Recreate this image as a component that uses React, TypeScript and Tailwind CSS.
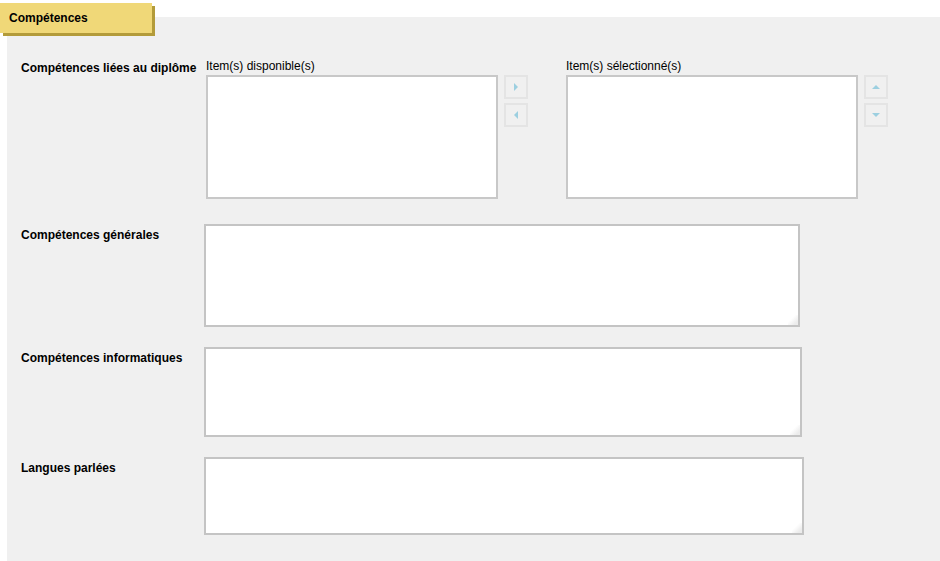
import React from 'react'

function Arrow({ dir }: { dir: 'right' | 'left' | 'up' | 'down' }) {
  const pts = {
    right: '2,0 6,4 2,8',
    left: '6,0 2,4 6,8',
    up: '0,6 4,2 8,6',
    down: '0,2 4,6 8,2',
  }[dir]
  return (
    <button className="w-[24px] h-[24px] border-2 border-[#e4e4e4] bg-[#f0f0f0] flex items-center justify-center">
      <svg width="8" height="8" viewBox="0 0 8 8">
        <polygon points={pts} fill="#9ccfe0" />
      </svg>
    </button>
  )
}

function ListBox({ title, arrows }: { title: string; arrows: ['right' | 'left' | 'up' | 'down', 'right' | 'left' | 'up' | 'down'] }) {
  return (
    <div className="flex gap-[6px]">
      <div className="flex flex-col">
        <div className="h-[16px] leading-[16px] text-[12px]">{title}</div>
        <div className="mt-px w-[292px] h-[124px] border-2 border-[#c8c8c8] bg-white" />
      </div>
      <div className="flex flex-col gap-[4px] pt-[17px]">
        <Arrow dir={arrows[0]} />
        <Arrow dir={arrows[1]} />
      </div>
    </div>
  )
}

function Field({ label, w, h }: { label: string; w: string; h: string }) {
  return (
    <div className="flex">
      <div className="w-[183px] shrink-0 pt-[3px] text-[12px] leading-[16px] font-bold">{label}</div>
      <textarea
        className={`${w} ${h} resize-none border-2 border-[#c4c4c4] bg-white bg-no-repeat bg-right-bottom bg-[length:10px_10px] bg-[linear-gradient(to_top_left,#ececec_0,#ececec_3px,#ffffff_9px)] outline-none`}
      />
    </div>
  )
}

export default function App() {
  return (
    <div className="relative w-[940px] h-[561px] bg-white text-black overflow-hidden" style={{ fontFamily: '"Liberation Sans", Arial, sans-serif' }}>
      <div className="absolute left-0 top-[3px] w-[152px] h-[30px] bg-[#f0d878] shadow-[3px_3px_0_#b39b3a] pl-[9px] text-[12px] font-bold leading-[30px] z-10">
        Compétences
      </div>
      <div className="ml-[7px] mt-[17px] h-[544px] bg-[#f0f0f0] pl-[14px] pt-[41px]">
        <div className="flex">
          <div className="w-[185px] shrink-0 pt-[2px] text-[12px] leading-[16px] font-bold">Compétences liées au diplôme</div>
          <div className="flex gap-[38px]">
            <ListBox title="Item(s) disponible(s)" arrows={['right', 'left']} />
            <ListBox title="Item(s) sélectionné(s)" arrows={['up', 'down']} />
          </div>
        </div>
        <div className="mt-[25px] flex flex-col gap-[20px]">
          <Field label="Compétences générales" w="w-[596px]" h="h-[103px]" />
          <Field label="Compétences informatiques" w="w-[598px]" h="h-[90px]" />
          <Field label="Langues parlées" w="w-[600px]" h="h-[78px]" />
        </div>
      </div>
    </div>
  )
}
